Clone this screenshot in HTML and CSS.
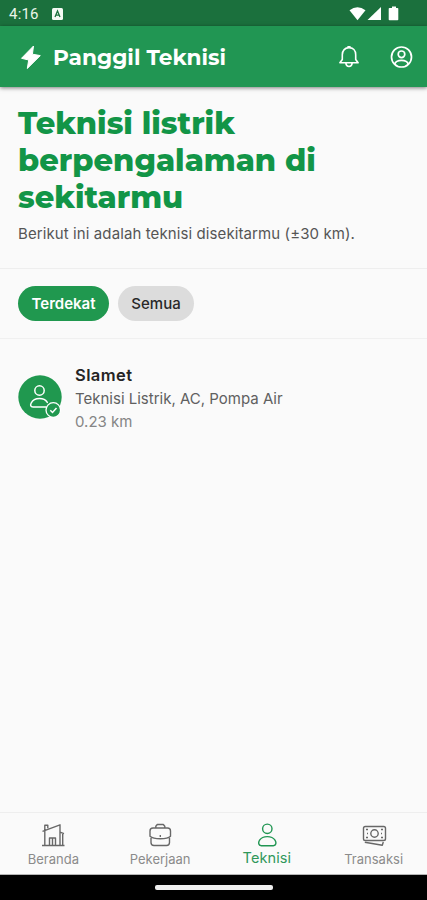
FILE: index.html
```html
<!DOCTYPE html>
<html lang="id">
<head>
<meta charset="utf-8">
<title>Panggil Teknisi</title>
<link rel="stylesheet" href="styles.css">
</head>
<body>
<div class="app">
  <div class="status">
    <span class="clock">4:16</span>
    <svg class="badge" width="11" height="12" viewBox="0 0 11 12"><rect width="11" height="12" rx="1.5" fill="#f4faf4"/><path d="M3 9 5.500 3 8 9M4 7.200h3" fill="none" stroke="#1b703d" stroke-width="1.300"/></svg>
    <svg class="signals" width="50" height="16" viewBox="0 0 50 16" fill="#fff"><path d="M.5 4.300Q8.500-2 16.500 4.300L8.500 14.200z"/><path d="M32 1v13H18.500z"/><path d="M41 2h2V.5h4V2h1.500q.8 0 .8.800v10.700q0 .8-.8.800H40.500q-.8 0-.8-.8V2.800q0-.8.800-.8z"/></svg>
  </div>
  <header class="bar">
    <svg class="bolt" width="22" height="24" viewBox="0 0 22 24"><path d="M13.500 1 1.500 13.300l7.200 1.700L7.300 23.500 20.300 10.600l-7.900-1.400z" fill="#fff" stroke="#fff" stroke-width="1" stroke-linejoin="round"/></svg>
    <span class="brand">Panggil Teknisi</span>
    <svg class="bell" width="22" height="24" viewBox="0 0 22 24" fill="none" stroke="#fff" stroke-width="1.600" stroke-linecap="round" stroke-linejoin="round"><path d="M4.300 14.500V9.800C4.300 5.500 7 2.600 11 2.600s6.700 2.900 6.700 7.200v4.700l2.400 3.300H1.900zM7.800 18.200c.3 2 1.500 3.300 3.200 3.300s2.900-1.300 3.200-3.300M10 2.500V1.700h2v.8"/></svg>
    <svg class="account" width="24" height="24" viewBox="0 0 24 24" fill="none" stroke="#fff" stroke-width="1.700"><circle cx="11.500" cy="12" r="10"/><circle cx="11.500" cy="9.300" r="3.300"/><path d="M4.700 19.200c.8-3 2.900-3.900 6.800-3.900s6 .9 6.800 3.900"/></svg>
  </header>
  <section class="intro">
    <h1>Teknisi listrik<br>berpengalaman di<br>sekitarmu</h1>
    <p>Berikut ini adalah teknisi disekitarmu (±30 km).</p>
  </section>
  <div class="filters">
    <button class="chip active">Terdekat</button>
    <button class="chip">Semua</button>
  </div>
  <main class="list">
    <article class="tech">
      <svg width="45" height="45" viewBox="0 0 45 45" fill="none" stroke="#fff" stroke-width="1.500"><circle cx="22" cy="22" r="21.700" fill="#20984f" stroke="none"/><circle cx="21.500" cy="15.500" r="4.700"/><path d="M28 32H15c-2.600 0-2.800-2-1.800-4 1.500-2.900 4.400-4.400 8.200-4.400 3.500 0 6.300 1.300 7.900 3.800" stroke-linecap="round"/><circle cx="35.300" cy="35" r="7.300" fill="#20984f" stroke-width="1.300"/><path d="m32.300 35.300 2.200 2.200 4-4.500"/></svg>
      <div class="info">
        <div class="name">Slamet</div>
        <div class="skills">Teknisi Listrik, AC, Pompa Air</div>
        <div class="dist">0.23 km</div>
      </div>
    </article>
  </main>
  <nav class="tabs">
    <a class="tab"><svg width="26" height="26" viewBox="0 0 26 26"><path d="M2 23.500h22.500M4.800 23.500V3.300h3v3M2.500 9.300 20 2.800v20.700M4.800 8.300v15M20 10.200l4 1.500M22.700 11.300v12.200M9.500 23.500v-7.500h6v7.500M12.500 16v7.500"/></svg><span>Beranda</span></a>
    <a class="tab"><svg width="26" height="26" viewBox="0 0 26 26"><path d="M8.800 6V4.300L10.300 2.500h6l1.500 1.800V6M6 6h14.500q3 0 3 3v5.300c-1.900 1.900-5.700 2.500-10.200 2.500S5.200 16.200 3 14.300V9q0-3 3-3zM4 16v4.500q0 3 3 3h12.500q3 0 3-3V16M13.300 13v2"/></svg><span>Pekerjaan</span></a>
    <a class="tab current"><svg width="26" height="26" viewBox="0 0 26 26"><circle cx="13.300" cy="6.800" r="4.700"/><path d="M7.300 23.700c-3 0-3.200-3.300-1.700-5.600 1.600-2.400 4.200-3.500 7.700-3.500s6.100 1.100 7.700 3.500c1.500 2.300 1.300 5.600-1.700 5.600z"/></svg><span>Teknisi</span></a>
    <a class="tab"><svg width="26" height="26" viewBox="0 0 26 26"><rect x="2.500" y="4.500" width="22" height="14" rx="1.800"/><circle cx="13.500" cy="11.500" r="3.700"/><path d="M5 7.500h2M20 7.500h2M5 15.500h2M20 15.500h2M6 11.500h1M20 11.500h1M3.800 20.300l17.500 2.900 1-3.200"/></svg><span>Transaksi</span></a>
  </nav>
  <div class="system"><div class="pill"></div></div>
</div>
</body>
</html>
```
FILE: styles.css
```css
* { box-sizing: border-box; }
body { margin: 0; background: #fafafa; font-family: Inter, sans-serif; }
.app { width: 427px; height: 900px; display: flex; flex-direction: column; overflow: hidden; }
.status { height: 26px; background: #1b703d; display: flex; align-items: center; padding: 1px 0 0 9px; flex: none; }
.clock { font: 400 15px/20px Roboto, sans-serif; color: #eaf5e9; width: 43px; letter-spacing: .2px; }
.signals { margin-left: auto; margin-right: 28px; }
.bar { height: 61px; background: #219653; display: flex; align-items: center; padding: 0 13px 0 20px; flex: none; box-shadow: 0 1px 4px rgba(0, 0, 0, .5); z-index: 1; }
.brand { margin: 1px 0 0 11px; font-family: Montserrat, Inter, sans-serif; font-size: 21.700px; font-weight: 700; line-height: 30px; color: #fff; white-space: nowrap; }
.bell { margin-left: auto; }
.account { margin-left: 30px; }
.intro { height: 182px; padding: 18px 18px 0; border-bottom: 1px solid #eee; flex: none; }
h1 { margin: 0; font-family: Montserrat, Inter, sans-serif; font-size: 30.500px; line-height: 37px; font-weight: 800; color: #129547; white-space: nowrap; }
p { margin: 8px 0 0; font-size: 15px; line-height: 20px; letter-spacing: .1px; color: #555; white-space: nowrap; width: max-content; }
.filters { height: 70px; padding-top: 17px; display: flex; gap: 9px; padding-left: 18px; border-bottom: 1px solid #f0f0f0; flex: none; }
.chip { width: 76px; height: 35px; padding: 0; border: 0; border-radius: 18px; background: #dcdcdc; color: #292929; font: 500 15px/35px Inter, sans-serif; }
.chip.active { width: 91px; background: #20984f; color: #fff; font-weight: 600; }
.list { flex: 1; padding: 25px 18px; }
.tech { display: flex; gap: 12px; }
.tech > svg { margin-top: 11px; }
.info { white-space: nowrap; }
.name { font-size: 16.500px; font-weight: 600; line-height: 23px; letter-spacing: .4px; color: #242424; }
.skills { font-size: 15px; line-height: 24px; color: #606060; }
.dist { font-size: 15px; line-height: 22px; color: #858585; }
.info > div { width: max-content; }
.tabs { height: 63px; border-top: 1px solid #eee; border-bottom: 1px solid #b5b5b5; display: grid; grid-template-columns: repeat(4, 1fr); flex: none; }
.tab { display: flex; flex-direction: column; align-items: center; padding-top: 9px; color: #8b8b8b; font-size: 13px; line-height: 18px; }
.tab svg { fill: none; stroke: #686868; stroke-width: 1.400; stroke-linejoin: round; }
.tab span { margin-top: 2px; }
.tab.current { color: #30985a; font-size: 14.500px; letter-spacing: .1px; }
.tab.current span { margin-top: 1px; }
.tab.current svg { stroke: #219653; }
.system { height: 25px; background: #000; display: flex; justify-content: center; padding-top: 10px; flex: none; }
.pill { width: 118px; height: 5px; border-radius: 2px; background: #eee; }
```
